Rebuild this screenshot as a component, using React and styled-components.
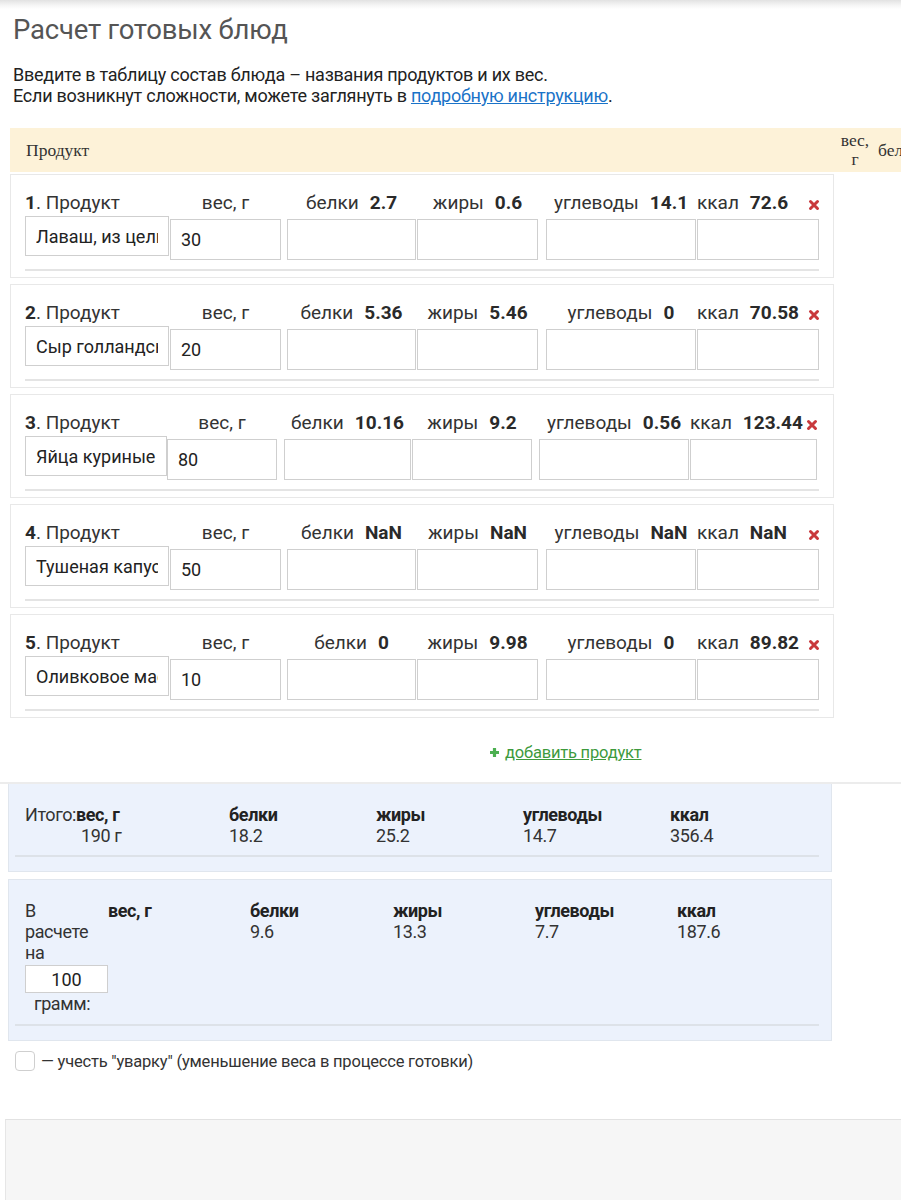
import React from "react";
import styled, { createGlobalStyle } from "styled-components";

const Global = createGlobalStyle`
  html, body { margin: 0; padding: 0; background: #fff; }
  body {
    font-family: Roboto, "Noto Sans", "Liberation Sans", sans-serif;
    color: #222;
    width: 901px;
    overflow: hidden;
  }
  * { box-sizing: border-box; }
`;

const Page = styled.div`
  position: relative;
  width: 901px;
  min-height: 1200px;
  overflow: hidden;
`;

const TopShade = styled.div`
  height: 9px;
  background: linear-gradient(#e2e2e2, #f6f6f6 60%, #fff);
`;

const Title = styled.h1`
  margin: 5px 0 0 13px;
  font-size: 27.5px;
  line-height: 31px;
  font-weight: 400;
  color: #555;
  letter-spacing: -0.2px;
`;

const Intro = styled.p`
  margin: 19px 0 0 13px;
  font-size: 18px;
  line-height: 21px;
  color: #222;
  letter-spacing: -0.25px;
`;

const Link = styled.a`
  color: #1a73c8;
  text-decoration: underline;
`;

const HeaderBar = styled.div`
  margin: 22px 0 2px 10px;
  width: 960px;
  height: 44px;
  background: #fdf2d8;
  display: flex;
  align-items: center;
  font-family: "Liberation Serif", "DejaVu Serif", serif;
  font-size: 17.5px;
  color: #333;
  white-space: nowrap;
`;

const HeadProduct = styled.div`
  width: 828px;
  flex-shrink: 0;
  padding-left: 16px;
`;

const HeadCol = styled.div`
  width: ${(p) => p.$w}px;
  text-align: ${(p) => p.$align || "center"};
  padding-left: ${(p) => p.$pl || 0}px;
  line-height: 19px;
  flex-shrink: 0;
`;

const Cards = styled.div`
  display: flex;
  flex-direction: column;
  gap: 6px;
  margin-left: 10px;
  width: 824px;
`;

const Card = styled.div`
  border: 1px solid #e8e8e8;
  background: #fff;
  padding: 17px 0 6px 14px;
`;

const Grid = styled.div`
  display: grid;
  grid-template-columns: ${(p) => p.$cols.map((c) => `${c}px`).join(" ")};
  align-items: start;
`;

const Label = styled.div`
  width: ${(p) => p.$w}px;
  height: 22px;
  font-size: 19px;
  line-height: 22px;
  color: #333;
  white-space: nowrap;
  text-align: ${(p) => p.$align || "center"};
  margin-bottom: 2px;
  display: ${(p) => (p.$flex ? "flex" : "block")};
  justify-content: space-between;
  align-items: center;
  b {
    font-weight: 700;
    color: #2a2a2a;
  }
`;

const Value = styled.b`
  margin-left: 11px;
`;

const Remove = styled.span`
  display: flex;
  align-items: center;
  width: 12px;
  height: 12px;
  margin-top: 3px;
`;

const Field = styled.input`
  width: ${(p) => p.$w}px;
  height: ${(p) => (p.$offset ? 41 : 40)}px;
  border: 1px solid #cfcfcf;
  background: #fff;
  font-family: inherit;
  font-size: 18px;
  color: #222;
  padding: 0 10px;
  outline: none;
  margin-top: ${(p) => p.$offset || 0}px;
`;

const Rule = styled.div`
  margin: 9px 14px 0 0;
  height: 2px;
  background: #e4e4e4;
`;

const AddRow = styled.div`
  margin: 24px 0 0 490px;
  height: 20px;
  display: flex;
  align-items: center;
  gap: 6px;
`;

const AddLink = styled.a`
  color: #3d9a3d;
  font-size: 16.5px;
  text-decoration: underline;
  letter-spacing: -0.2px;
`;

const SumWrap = styled.div`
  margin-top: 20px;
  border-top: 2px solid #ececec;
`;

const SumBox = styled.div`
  margin-left: 8px;
  width: 824px;
  background: #ecf2fc;
  border: 1px solid #e0e6ee;
  border-top: none;
  padding: ${(p) => p.$pt}px 12px 14px 6px;
  & + & {
    margin-top: 7px;
    border-top: 1px solid #e0e6ee;
  }
`;

const SumGrid = styled.div`
  display: grid;
  grid-template-columns: ${(p) => p.$cols};
  padding-left: 10px;
  font-size: 18px;
  line-height: 21px;
  color: #333;
  letter-spacing: -0.4px;
`;

const SumCell = styled.div`
  b {
    font-weight: 700;
    color: #222;
  }
`;

const SumValue = styled.div`
  padding-left: ${(p) => p.$pl || 0}px;
`;

const PerLabel = styled.div`
  width: 80px;
  display: flex;
  flex-direction: column;
  align-items: flex-start;
`;

const PerInput = styled.input`
  width: 83px;
  height: 28px;
  border: 1px solid #cfcfcf;
  font-family: inherit;
  font-size: 18px;
  text-align: center;
  color: #222;
  margin: 2px 0 0;
  padding: 0;
`;

const Gram = styled.span`
  padding-left: 9px;
`;

const SumRule = styled.div`
  margin-top: ${(p) => p.$mt}px;
  height: 2px;
  background: #dde2e8;
`;

const CheckRow = styled.label`
  display: flex;
  align-items: center;
  gap: 6px;
  margin: 10px 0 0 15px;
  font-size: 16.5px;
  color: #333;
  letter-spacing: -0.2px;
`;

const Check = styled.span`
  width: 20px;
  height: 20px;
  border: 1px solid #cfcfcf;
  border-radius: 4px;
  background: #fff;
`;

const Footer = styled.div`
  margin: 48px 0 0 5px;
  height: 100px;
  background: #f6f6f6;
  border-top: 1px solid #e2e2e2;
  border-left: 1px solid #e6e6e6;
  position: relative;
`;

const FooterAccent = styled.div`
  position: absolute;
  right: 0;
  bottom: 0;
  width: 155px;
  height: 4px;
  background: #4caf50;
`;

const STD = { cols: [145, 117, 130, 129, 151, 122], w: [144, 111, 129, 121, 150, 122] };
const WIDE = { cols: [142, 117, 128, 127, 151, 127], w: [142, 110, 127, 120, 150, 127] };

const products = [
  { name: "Лаваш, из цельнозерновой муки", w: "30", p: "2.7", f: "0.6", c: "14.1", k: "72.6", l: STD },
  { name: "Сыр голландский", w: "20", p: "5.36", f: "5.46", c: "0", k: "70.58", l: STD },
  { name: "Яйца куриные", w: "80", p: "10.16", f: "9.2", c: "0.56", k: "123.44", l: WIDE },
  { name: "Тушеная капуста", w: "50", p: "NaN", f: "NaN", c: "NaN", k: "NaN", l: STD },
  { name: "Оливковое масло", w: "10", p: "0", f: "9.98", c: "0", k: "89.82", l: STD },
];

const Cross = () => (
  <svg width="12" height="12" viewBox="0 0 12 12">
    <path d="M2.5 2.5 L9.5 9.5 M9.5 2.5 L2.5 9.5" stroke="#c9393d" strokeWidth="3" strokeLinecap="round" />
  </svg>
);

const Plus = () => (
  <svg width="9" height="9" viewBox="0 0 9 9">
    <path d="M4.5 0.8 V8.2 M0.8 4.5 H8.2" stroke="#4caf50" strokeWidth="3.2" strokeLinecap="round" />
  </svg>
);

const ProductCard = ({ i, item }) => {
  const { cols, w } = item.l;
  return (
    <Card>
      <Grid $cols={cols}>
        <Label $w={w[0]} $align="left">
          <b>{i}</b>. Продукт
        </Label>
        <Label $w={w[1]}>вес, г</Label>
        <Label $w={w[2]}>
          белки<Value>{item.p}</Value>
        </Label>
        <Label $w={w[3]}>
          жиры<Value>{item.f}</Value>
        </Label>
        <Label $w={w[4]}>
          углеводы<Value>{item.c}</Value>
        </Label>
        <Label $w={w[5] + 1} $flex>
          <span>
            ккал<Value>{item.k}</Value>
          </span>
          <Remove>
            <Cross />
          </Remove>
        </Label>
        <Field $w={w[0]} defaultValue={item.name} readOnly />
        <Field $w={w[1]} $offset={3} defaultValue={item.w} readOnly />
        <Field $w={w[2]} $offset={3} readOnly />
        <Field $w={w[3]} $offset={3} readOnly />
        <Field $w={w[4]} $offset={3} readOnly />
        <Field $w={w[5]} $offset={3} readOnly />
      </Grid>
      <Rule />
    </Card>
  );
};

export default function App() {
  return (
    <Page>
      <Global />
      <TopShade />
      <Title>Расчет готовых блюд</Title>
      <Intro>
        Введите в таблицу состав блюда – названия продуктов и их вес.
        <br />
        Если возникнут сложности, можете заглянуть в <Link href="#">подробную инструкцию</Link>.
      </Intro>
      <HeaderBar>
        <HeadProduct>Продукт</HeadProduct>
        <HeadCol $w={34}>
          вес,
          <br />г
        </HeadCol>
        <HeadCol $w={80} $align="left" $pl={6}>
          белки
        </HeadCol>
      </HeaderBar>
      <Cards>
        {products.map((item, idx) => (
          <ProductCard key={idx} i={idx + 1} item={item} />
        ))}
      </Cards>
      <AddRow>
        <Plus />
        <AddLink href="#">добавить продукт</AddLink>
      </AddRow>
      <SumWrap>
        <SumBox $pt={20}>
          <SumGrid $cols="204px 147px 147px 147px 140px">
            <SumCell>
              Итого:<b>вес, г</b>
              <SumValue $pl={56}>190 г</SumValue>
            </SumCell>
            <SumCell>
              <b>белки</b>
              <SumValue>18.2</SumValue>
            </SumCell>
            <SumCell>
              <b>жиры</b>
              <SumValue>25.2</SumValue>
            </SumCell>
            <SumCell>
              <b>углеводы</b>
              <SumValue>14.7</SumValue>
            </SumCell>
            <SumCell>
              <b>ккал</b>
              <SumValue>356.4</SumValue>
            </SumCell>
          </SumGrid>
          <SumRule $mt={9} />
        </SumBox>
        <SumBox $pt={20}>
          <SumGrid $cols="83px 142px 143px 142px 142px 140px">
            <PerLabel>
              <span>В</span>
              <span>расчете</span>
              <span>на</span>
              <PerInput defaultValue="100" readOnly />
              <Gram>грамм:</Gram>
            </PerLabel>
            <SumCell>
              <b>вес, г</b>
            </SumCell>
            <SumCell>
              <b>белки</b>
              <SumValue>9.6</SumValue>
            </SumCell>
            <SumCell>
              <b>жиры</b>
              <SumValue>13.3</SumValue>
            </SumCell>
            <SumCell>
              <b>углеводы</b>
              <SumValue>7.7</SumValue>
            </SumCell>
            <SumCell>
              <b>ккал</b>
              <SumValue>187.6</SumValue>
            </SumCell>
          </SumGrid>
          <SumRule $mt={10} />
        </SumBox>
      </SumWrap>
      <CheckRow>
        <Check />
        — учесть "уварку" (уменьшение веса в процессе готовки)
      </CheckRow>
      <Footer>
        <FooterAccent />
      </Footer>
    </Page>
  );
}
